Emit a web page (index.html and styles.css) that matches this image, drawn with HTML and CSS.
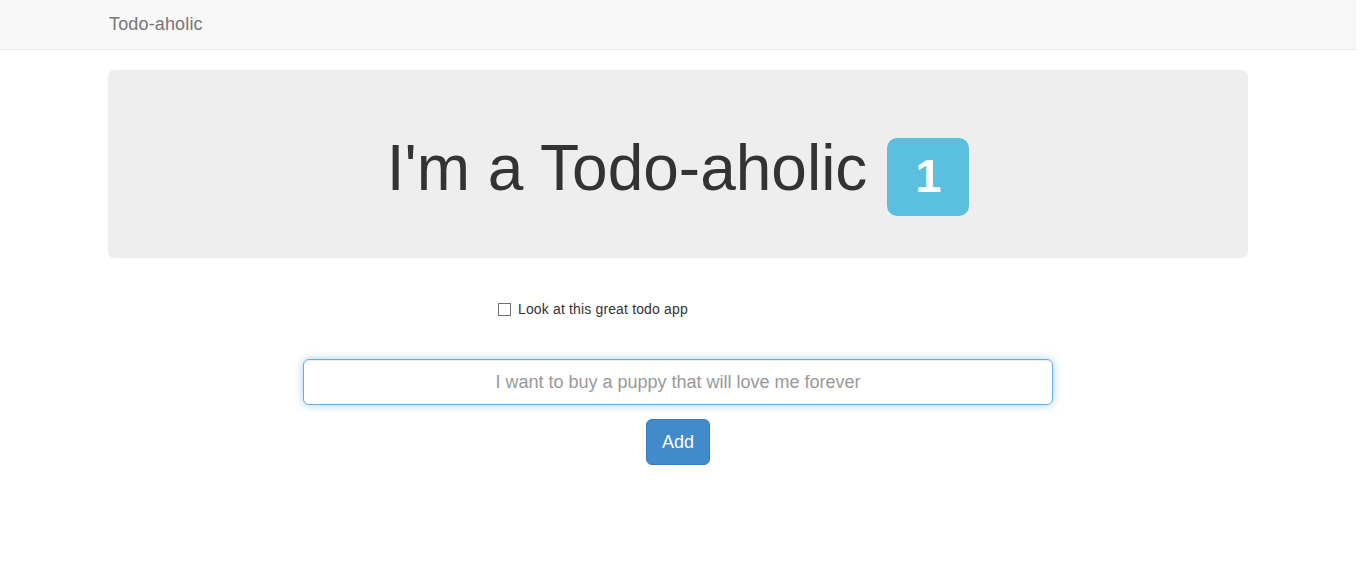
FILE: index.html
```html
<!DOCTYPE html>
<html lang="en">
<head>
<meta charset="utf-8">
<title>Todo-aholic</title>
<link rel="stylesheet" href="styles.css">
</head>
<body>
<nav class="navbar">
  <div class="container">
    <a class="brand" href="#">Todo-aholic</a>
  </div>
</nav>
<main class="container main">
  <section class="jumbotron">
    <h1>I'm a Todo-aholic <span class="badge">1</span></h1>
  </section>
  <ul class="todo-list">
    <li class="todo-item">
      <label><input type="checkbox" class="check"><span>Look at this great todo app</span></label>
    </li>
  </ul>
  <form class="todo-form" onsubmit="return false">
    <input type="text" class="todo-input" placeholder="I want to buy a puppy that will love me forever">
    <button type="submit" class="btn">Add</button>
  </form>
</main>
</body>
</html>
```

FILE: styles.css
```css
* { box-sizing: border-box; }
html, body { margin: 0; padding: 0; }
body {
  font-family: "Liberation Sans", Arial, Helvetica, sans-serif;
  font-size: 14px;
  line-height: 20px;
  color: #333;
  background: #fff;
  padding-right: 6px;
}
.container {
  width: 1140px;
  margin: 0 auto;
}
.navbar {
  height: 50px;
  background: #f8f8f8;
  border-bottom: 1px solid #e7e7e7;
}
.brand {
  display: block;
  padding: 14px 0 15px 1px;
  font-size: 18px;
  line-height: 20px;
  letter-spacing: 0.15px;
  color: #777;
  text-decoration: none;
}
.main { padding-top: 20px; }
.jumbotron {
  background: #eeeeee;
  border-radius: 6px;
  height: 188px;
  padding-top: 64px;
  text-align: center;
}
.jumbotron h1 {
  margin: 0;
  font-size: 64px;
  line-height: 69px;
  font-weight: 500;
  color: #333;
}
.badge {
  display: inline-block;
  margin-left: 2px;
  background: #5bc0de;
  color: #fff;
  font-weight: bold;
  font-size: 47px;
  line-height: 1;
  padding: 14px 28px 17px;
  border-radius: 10px;
  vertical-align: -2px;
}
.todo-list {
  list-style: none;
  margin: 41px 0 0 390px;
  padding: 0;
}
.todo-item { height: 20px; }
.todo-item label {
  display: flex;
  align-items: center;
  gap: 7px;
  cursor: pointer;
  letter-spacing: 0.15px;
}
.check {
  appearance: none;
  -webkit-appearance: none;
  width: 13px;
  height: 13px;
  margin: 0;
  border: 1px solid #707070;
  background: #fff;
  border-radius: 0;
}
.todo-form {
  margin-top: 40px;
  display: flex;
  flex-direction: column;
  align-items: center;
  gap: 14px;
}
.todo-input {
  width: 750px;
  height: 46px;
  padding: 10px 16px;
  font-family: inherit;
  font-size: 18px;
  line-height: 24px;
  text-align: center;
  color: #555;
  border: 1px solid #66afe9;
  border-radius: 6px;
  outline: none;
  box-shadow: inset 0 1px 1px rgba(0,0,0,.075), 0 0 8px rgba(102,175,233,.6);
}
.todo-input::placeholder { color: #999; }
.btn {
  height: 46px;
  padding: 10px 15px;
  font-family: inherit;
  font-size: 18px;
  line-height: 24px;
  color: #fff;
  background: #428bca;
  border: 1px solid #357ebd;
  border-radius: 6px;
  cursor: pointer;
}
```
